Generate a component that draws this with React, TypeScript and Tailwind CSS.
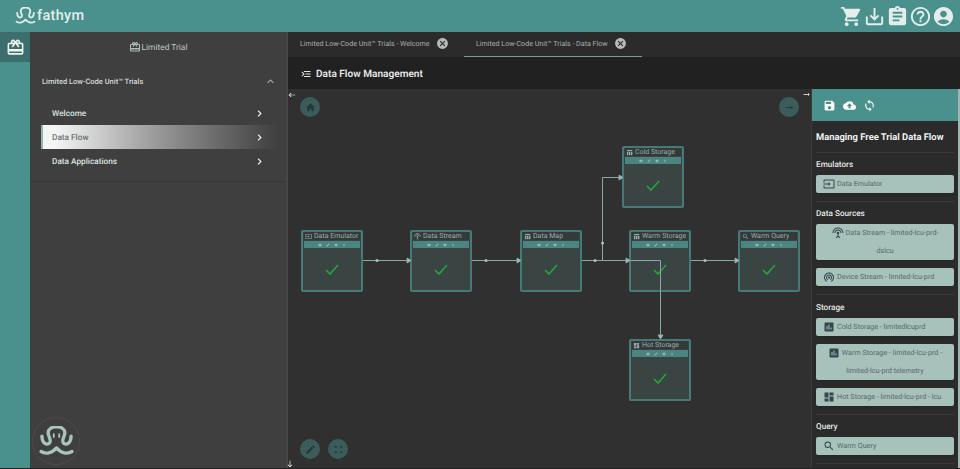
import { MdShoppingCart, MdSaveAlt, MdAssignment, MdHelpOutline, MdAccountCircle, MdRedeem, MdSave, MdCloudUpload, MdSync, MdChevronRight, MdExpandLess, MdHome, MdEdit, MdInput, MdSettingsInputAntenna, MdWifiTethering, MdAssessment, MdDashboard, MdSearch, MdCancel, MdMenuOpen, MdVisibility, MdSettings, MdClose, MdTableChart, MdArrowRightAlt, MdWest, MdSouth } from "react-icons/md"
import type { IconType } from "react-icons"

function Octopus({ className, eyes }: { className: string; eyes?: boolean }) {
    return (
        <svg viewBox="0 0 40 34" className={className} fill="none" stroke="currentColor" strokeLinecap="round" strokeLinejoin="round">
            <path d="M4 11 C4 19 9 21 12 19 C15 17 12 13 11 9 C10 3 15 1 20 1 C25 1 30 3 29 9 C28 13 25 17 28 19 C31 21 36 19 36 11" strokeWidth="3.6" />
            <path d="M3 28 C8 31 15 30 20 24 C25 30 32 31 37 28" strokeWidth="3.6" />
            {eyes && <path d="M17 9 V12 M23 9 V12" strokeWidth="2" />}
        </svg>
    )
}

function NavItem({ label, active }: { label: string; active?: boolean }) {
    return (
        <div className={`flex h-6 items-center justify-between pr-[12px] text-[8.25px] font-medium ${active ? "border-l-2 border-[#8fb5ad] bg-linear-to-r from-[#f4f6f5] from-[5%] via-[#a0a0a0] via-[45%] to-[#3f3f3f] pl-[9px] text-[#6d7274]" : "pl-[11px] text-[#dde3e1]"}`}>
            <span className="pt-[2px]">{label}</span>
            <MdChevronRight className="text-[13px] text-white" />
        </div>
    )
}

function FlowNode({ label, icon: Icon, pos }: { label: string; icon: IconType; pos: string }) {
    return (
        <div className={`absolute flex h-[62px] w-[62px] flex-col rounded-[2px] border-2 border-[#467a77] bg-[#3a4443] ${pos}`}>
            <div className="mx-px flex h-[8px] items-center gap-[2px] bg-[#333a3a] pl-[1px] text-[7px] leading-none text-[#9fabab]">
                <Icon className="shrink-0 text-[7px]" />
                <span className="truncate">{label}</span>
            </div>
            <div className="mx-px mt-px flex h-[7px] items-center justify-center gap-[4px] bg-[#4a8582] text-[4px] text-[#a9c4c0]">
                <MdVisibility /><MdEdit /><MdSettings /><MdClose />
            </div>
            <div className="flex flex-1 items-center justify-center">
                <svg viewBox="0 0 14 11" className="h-[11px] w-[14px]" fill="none" stroke="#22a53a" strokeWidth="1.7">
                    <path d="M1 6 L5 10 L13 1" />
                </svg>
            </div>
        </div>
    )
}

function RoundBtn({ children, pos }: { children: React.ReactNode; pos: string }) {
    return <div className={`absolute flex h-5 w-5 items-center justify-center rounded-full bg-[#3c5c5c] text-[11px] text-[#263838] ${pos}`}>{children}</div>
}

function StreamButton({ icon: Icon, lines }: { icon: IconType; lines: string[] }) {
    const twoLines = lines.length > 1
    return (
        <div className="rounded-[2px] bg-[#a6c2ba] text-center text-[7.2px] leading-[18px] text-[#56696b] shadow-sm">
            <div className={`flex h-[18px] items-center gap-[2px] ${twoLines ? "justify-center" : "pl-[7px]"}`}>
                <Icon className="shrink-0 text-[12px] text-[#34454f]" />
                <span className="whitespace-nowrap">{lines[0]}</span>
            </div>
            {twoLines && <div>{lines[1]}</div>}
        </div>
    )
}

function PanelGroup({ title, roomy, children }: { title: string; roomy?: boolean; children: React.ReactNode }) {
    return (
        <div className={`border-t border-[#3a3a3a] pb-[8px] ${roomy ? "pt-[5px]" : "pt-[4px]"}`}>
            <div className="mb-[3px] pt-px text-[8.2px] leading-[14px] font-medium text-[#e4e8e7]">{title}</div>
            <div className="flex flex-col gap-2">{children}</div>
        </div>
    )
}

export default function App() {
    return (
        <div className="flex h-[469px] w-[960px] flex-col overflow-hidden bg-[#303030] font-['Roboto',sans-serif] [text-rendering:geometricPrecision]">
            <header className="flex h-8 shrink-0 items-center justify-between bg-[#4a908c] pl-[15px] pr-[5px] text-[#e3eeec]">
                <div className="flex items-center gap-px">
                    <Octopus className="h-[18px] w-[21px] text-[#dcebe8]" />
                    <span className="text-[14.5px] leading-none font-medium tracking-[0.3px]">fathym</span>
                </div>
                <div className="flex items-center text-[23px]">
                    <MdShoppingCart />
                    <MdSaveAlt />
                    <MdAssignment />
                    <MdHelpOutline />
                    <MdAccountCircle />
                </div>
            </header>

            <div className="flex min-h-0 flex-1">
                <nav className="w-[30px] shrink-0 bg-[#4a908c]">
                    <div className="flex h-[30px] items-center justify-center bg-[#3d6e6e] text-[19px] text-[#eef3f2]">
                        <MdRedeem />
                    </div>
                </nav>

                <aside className="flex w-[258px] shrink-0 flex-col border-r-2 border-[#474747] bg-[#3f3f3f]">
                    <div className="flex h-[30px] items-center justify-center gap-px text-[8.4px] text-[#bccac7]">
                        <MdRedeem className="text-[12px] text-[#a9bfba]" />
                        <span className="pt-[2px]">Limited Trial</span>
                    </div>
                    <div className="flex h-[38px] items-center justify-between pl-3 pr-[9px] text-[7.5px] font-medium text-[#d5dbd9]">
                        <span className="pt-[2px]">Limited Low-Code Unit™ Trials</span>
                        <MdExpandLess className="text-[13px] text-[#a4adab]" />
                    </div>
                    <div className="ml-[11px] mr-[8px] pb-2 pt-px">
                        <NavItem label="Welcome" />
                        <NavItem label="Data Flow" active />
                        <NavItem label="Data Applications" />
                    </div>
                    <div className="border-t border-[#373737]" />
                    <div className="relative flex-1">
                        <div className="absolute bottom-[3px] left-[2px] flex h-[48px] w-[48px] items-center justify-center rounded-full border border-[#4a4a4a] text-[#a8c4bd]">
                            <Octopus className="h-[31px] w-[37px]" eyes />
                        </div>
                    </div>
                </aside>

                <main className="flex min-w-0 flex-1 flex-col">
                    <div className="flex h-[25px] shrink-0 bg-[#2b2b2b] text-[7.1px] text-[#a9afad]">
                        <div className="flex w-[164px] items-center gap-[6px] pl-3 pb-[2px]">
                            <span className="whitespace-nowrap pt-[2px]">Limited Low-Code Unit™ Trials - Welcome</span>
                            <MdCancel className="shrink-0 text-[13px] text-[#b5b9b8]" />
                        </div>
                        <div className="ml-[12px] flex w-[178px] items-center gap-[6px] border-b border-[#7b9e98] pl-3 pb-[2px]">
                            <span className="whitespace-nowrap pt-[2px]">Limited Low-Code Unit™ Trials - Data Flow</span>
                            <MdCancel className="shrink-0 text-[13px] text-[#b5b9b8]" />
                        </div>
                    </div>
                    <div className="flex h-8 shrink-0 items-center gap-[4px] bg-[#212121] pl-3 pt-px text-[10.1px] font-semibold text-[#e8e8e8]">
                        <MdMenuOpen className="-scale-x-100 text-[12px]" />
                        <span className="pt-[2px]">Data Flow Management</span>
                    </div>

                    <div className="flex min-h-0 flex-1">
                        <div className="relative flex-1 bg-[#303030]">
                            <FlowNode label="Data Emulator" icon={MdInput} pos="left-[13px] top-[141px]" />
                            <FlowNode label="Data Stream" icon={MdSettingsInputAntenna} pos="left-[122px] top-[141px]" />
                            <FlowNode label="Data Map" icon={MdTableChart} pos="left-[232px] top-[141px]" />
                            <FlowNode label="Cold Storage" icon={MdTableChart} pos="left-[334px] top-[57px]" />
                            <FlowNode label="Warm Storage" icon={MdTableChart} pos="left-[341px] top-[141px]" />
                            <FlowNode label="Warm Query" icon={MdSearch} pos="left-[450px] top-[141px]" />
                            <FlowNode label="Hot Storage" icon={MdDashboard} pos="left-[341px] top-[250px]" />

                            {/* links sit above the nodes, the hot storage one crosses warm storage */}
                            <svg className="absolute inset-0 h-full w-full" fill="none" stroke="#8aa8a8" strokeWidth="1">
                                <path d="M75 171.5 H122 M184 171.5 H232 M294 171.5 H341 M403 171.5 H450" />
                                <path d="M341 171.5 H372.5 V250 M314.5 171.5 V88.5 H334" />
                                <path d="M370 246 L372.5 250 L375 246 Z M447 169 L451 171.5 L447 174 Z M119 169 L123 171.5 L119 174 Z M229 169 L233 171.5 L229 174 Z M338 169 L342 171.5 L338 174 Z M331 86 L335 88.5 L331 91 Z" fill="#a5c0c0" />
                                <path d="M89 171.5 h.1 M198 171.5 h.1 M307 171.5 h.1 M417 171.5 h.1 M314.5 154 h.1" stroke="#a5c0c0" strokeWidth="3" strokeLinecap="round" />
                            </svg>

                            <MdWest className="absolute left-0 top-[2px] text-[8px] text-white" />
                            <MdArrowRightAlt className="absolute right-0 top-[1px] text-[9px] text-white" />
                            <MdSouth className="absolute bottom-0 left-[-2px] text-[8px] text-white" />

                            <RoundBtn pos="left-[12px] top-[8px]"><MdHome /></RoundBtn>
                            <RoundBtn pos="left-[491px] top-[8px]"><MdArrowRightAlt /></RoundBtn>
                            <RoundBtn pos="bottom-[9px] left-[12px]"><MdEdit /></RoundBtn>
                            <RoundBtn pos="bottom-[9px] left-[40px]">
                                <svg viewBox="0 0 12 12" className="h-[11px] w-[11px]" fill="#263838">
                                    <circle cx="3" cy="3" r="1.2" /><circle cx="9" cy="3" r="1.2" /><circle cx="3" cy="9" r="1.2" /><circle cx="9" cy="9" r="1.2" />
                                </svg>
                            </RoundBtn>
                        </div>

                        <div className="flex w-[149px] shrink-0">
                            <div className="w-[147px] overflow-hidden border-l border-[#3a3a3a] bg-[#2b2b2b]">
                                <div className="flex h-8 items-center gap-[7px] bg-[#4a908c] pl-[11px] text-[13px] text-white">
                                    <MdSave />
                                    <MdCloudUpload />
                                    <MdSync />
                                </div>
                                <div className="pl-[4px] pr-[4px]">
                                    <div className="pt-[10px] pb-[7px] text-[9.4px] leading-[14px] font-bold whitespace-nowrap text-[#f1f1f1]">Managing Free Trial Data Flow</div>
                                    <PanelGroup title="Emulators">
                                        <StreamButton icon={MdInput} lines={["Data Emulator"]} />
                                    </PanelGroup>
                                    <PanelGroup title="Data Sources">
                                        <StreamButton icon={MdSettingsInputAntenna} lines={["Data Stream - limited-lcu-prd-", "dslcu"]} />
                                        <StreamButton icon={MdWifiTethering} lines={["Device Stream - limited-lcu-prd"]} />
                                    </PanelGroup>
                                    <PanelGroup title="Storage" roomy>
                                        <StreamButton icon={MdAssessment} lines={["Cold Storage - limitedlcuprd"]} />
                                        <StreamButton icon={MdAssessment} lines={["Warm Storage - limited-lcu-prd -", "limited-lcu-prd:telemetry"]} />
                                        <StreamButton icon={MdDashboard} lines={["Hot Storage - limited-lcu-prd - lcu"]} />
                                    </PanelGroup>
                                    <PanelGroup title="Query">
                                        <StreamButton icon={MdSearch} lines={["Warm Query"]} />
                                    </PanelGroup>
                                    <div className="border-t border-[#3a3a3a]" />
                                </div>
                            </div>
                            <div className="w-[2px] bg-[#9fb5b1]" />
                        </div>
                    </div>
                </main>
            </div>
            <div className="h-px shrink-0 bg-[#222]" />
        </div>
    )
}
